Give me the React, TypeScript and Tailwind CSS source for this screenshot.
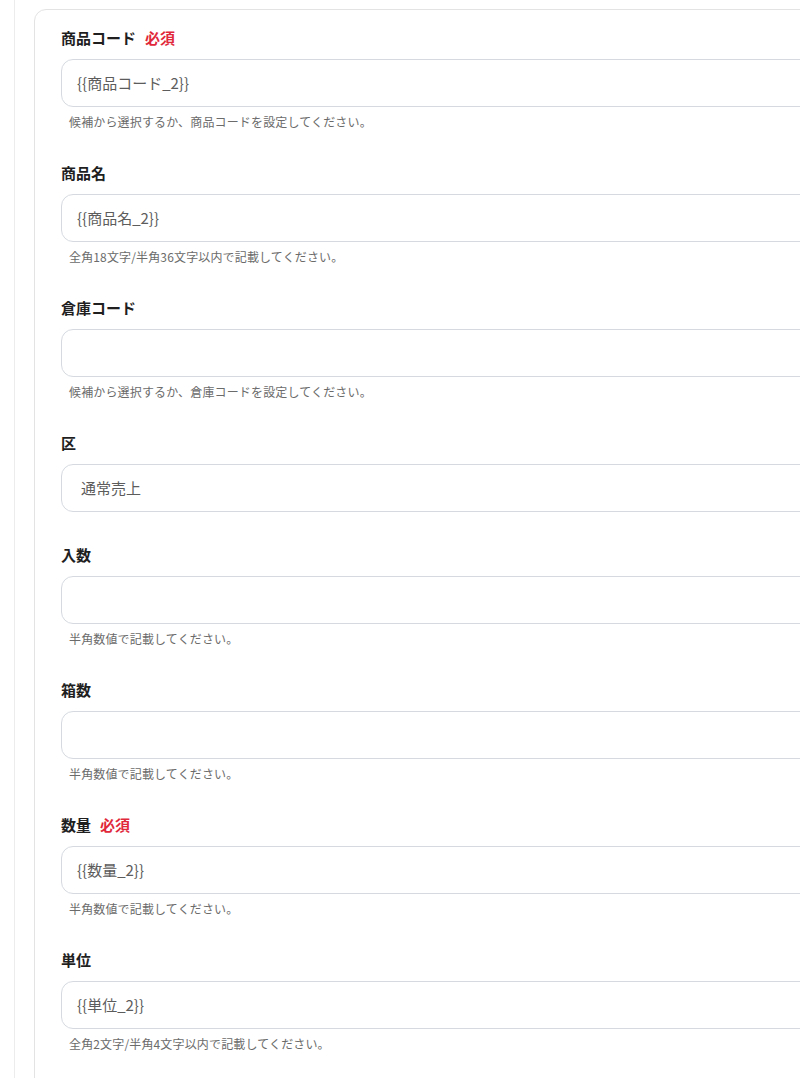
import { ReactNode } from "react"

interface FieldProps {
  label: string
  required?: boolean
  value?: string
  help?: string
  select?: boolean
}

const Field = ({ label, required, value, help, select }: FieldProps) => {
  return (
    <div className="flex flex-col">
      <div className="flex items-center gap-[9px] h-5 text-[15px] font-bold leading-5 text-[#1f1f1f]">
        <span>{label}</span>
        {required && <span className="text-[#e0283a]">必須</span>}
      </div>
      <div
        className={
          "mt-[11px] h-12 w-[800px] rounded-xl border border-[#d6dae0] bg-white flex items-center text-[15px] text-[#5c5c5c] " +
          (select ? "pl-[19px]" : "pl-[15px]")
        }
      >
        {value}
      </div>
      {help && (
        <p className="pl-2 mt-[7px] h-4 text-[12px] tracking-[0.15px] leading-4 text-[#6b6b6b]">{help}</p>
      )}
    </div>
  )
}

const Card = ({ children }: { children: ReactNode }) => (
  <div className="w-[820px] min-h-[1080px] rounded-t-xl border border-[#e3e3e3] bg-white pl-[26px] pt-[18px] flex flex-col gap-[33px]">
    {children}
  </div>
)

export default function App() {
  return (
    <div
      className="w-full h-[1078px] overflow-hidden bg-white pl-[14px]"
      style={{ fontFamily: '"Noto Sans CJK JP", "Noto Sans", sans-serif' }}
    >
      <div className="h-full border-l border-[#ececec] pl-[19px] pt-[9px]">
        <Card>
          <Field label="商品コード" required value="{{商品コード_2}}" help="候補から選択するか、商品コードを設定してください。" />
          <Field label="商品名" value="{{商品名_2}}" help="全角18文字/半角36文字以内で記載してください。" />
          <Field label="倉庫コード" help="候補から選択するか、倉庫コードを設定してください。" />
          <Field label="区" value="通常売上" select />
          <Field label="入数" help="半角数値で記載してください。" />
          <Field label="箱数" help="半角数値で記載してください。" />
          <Field label="数量" required value="{{数量_2}}" help="半角数値で記載してください。" />
          <Field label="単位" value="{{単位_2}}" help="全角2文字/半角4文字以内で記載してください。" />
        </Card>
      </div>
    </div>
  )
}
